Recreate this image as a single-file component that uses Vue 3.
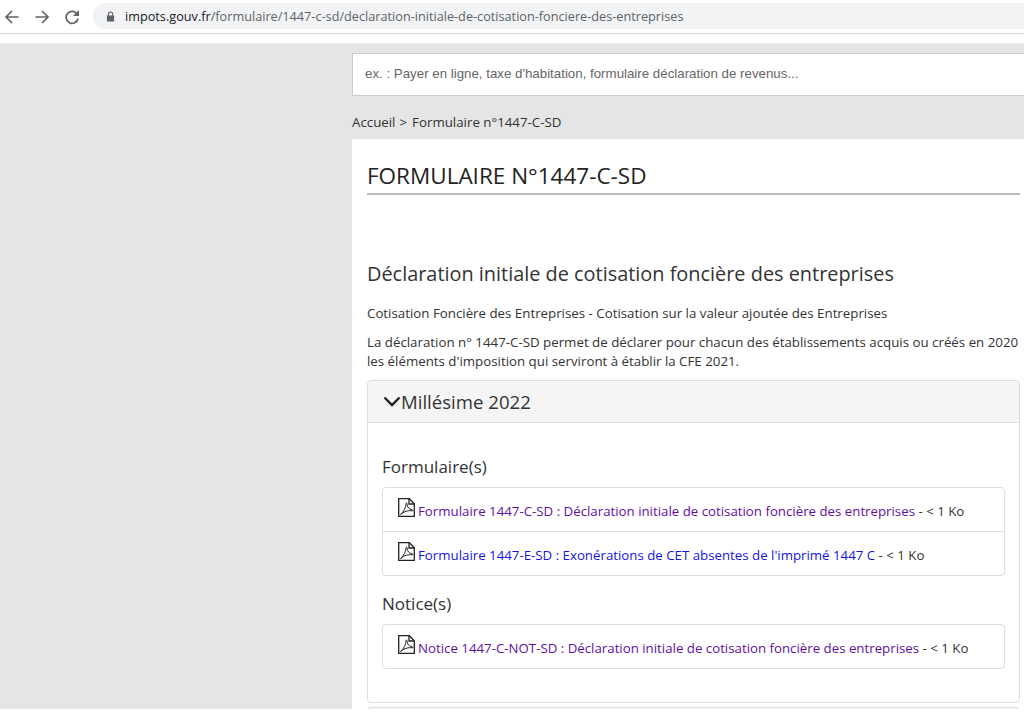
<template>
  <div class="page">
    <header class="chrome">
      <div class="nav">
        <svg class="nav-icon" viewBox="0 0 16 16"><path d="M14.500 8H2.500M8 2 2 8l6 6" /></svg>
        <svg class="nav-icon" viewBox="0 0 16 16"><path d="M1.500 8h12M8 2l6 6-6 6" /></svg>
        <svg class="nav-icon" viewBox="0 0 16 16"><path d="M13.400 5.500A6 6 0 1 0 14 9.500" /><path class="fill" d="M15 1v6h-6z" /></svg>
      </div>
      <div class="omnibox">
        <svg class="lock" viewBox="0 0 10 12"><path d="M2 5V3.400a3 3 0 0 1 6 0V5h1v6.500H1V5zm1.200 0h3.600V3.400a1.800 1.800 0 0 0-3.600 0z" /></svg>
        <span class="url"><span class="host">impots.gouv.fr</span>/formulaire/1447-c-sd/declaration-initiale-de-cotisation-fonciere-des-entreprises</span>
      </div>
    </header>
    <div class="spacer"></div>
    <main class="body">
      <div class="column">
        <div class="search">ex. : Payer en ligne, taxe d'habitation, formulaire déclaration de revenus...</div>
        <nav class="crumbs"><span>Accueil</span><span class="sep">&gt;</span><span>Formulaire n°1447-C-SD</span></nav>
        <section class="sheet">
          <h1>FORMULAIRE N°1447-C-SD</h1>
          <h2>Déclaration initiale de cotisation foncière des entreprises</h2>
          <p class="sub">Cotisation Foncière des Entreprises - Cotisation sur la valeur ajoutée des Entreprises</p>
          <p class="intro">La déclaration n° 1447-C-SD permet de déclarer pour chacun des établissements acquis ou créés en 2020 les éléments d'imposition qui serviront à établir la CFE 2021.</p>
          <div class="panel">
            <div class="panel-head">
              <svg class="chev" viewBox="0 0 18 11"><path d="M1.500 1.500 9 9l7.500-7.500" /></svg>
              <span>Millésime 2022</span>
            </div>
            <div class="panel-body">
              <template v-for="g in groups" :key="g.title">
                <h3>{{ g.title }}</h3>
                <ul class="list">
                  <li v-for="d in g.docs" :key="d.label">
                    <svg class="pdf" viewBox="0 0 17 19">
                      <path d="M.7.7h10.600l5 5v12.600H.7z" />
                      <path d="M11 .7v5.300h5.300" />
                      <path class="thin" d="M2.500 16.500C5.500 14 8 9.500 8 6c0-1.500 1.200-1.200 1.200.4 0 2.800 2 5 5 5.400 1.100.2 1 1.200-.1 1-3-.5-6.800.3-9 1.900-1.200.9-3 2.400-2.600 1.800z" />
                    </svg>
                    <a :class="d.visited ? 'visited' : 'fresh'">{{ d.label }}</a>
                    <span class="size"> - &lt; 1 Ko</span>
                  </li>
                </ul>
              </template>
            </div>
          </div>
          <div class="next"></div>
        </section>
      </div>
    </main>
  </div>
</template>

<script setup>
const groups = [
  {
    title: 'Formulaire(s)',
    docs: [
      { label: 'Formulaire 1447-C-SD : Déclaration initiale de cotisation foncière des entreprises', visited: true },
      { label: "Formulaire 1447-E-SD : Exonérations de CET absentes de l'imprimé 1447 C", visited: false },
    ],
  },
  {
    title: 'Notice(s)',
    docs: [
      { label: 'Notice 1447-C-NOT-SD : Déclaration initiale de cotisation foncière des entreprises', visited: true },
    ],
  },
]
</script>

<style>
html, body { margin: 0; background: #fff; overflow: hidden; }
</style>

<style scoped>
.page {
  width: 1024px;
  height: 713px;
  overflow: hidden;
  font-family: "Open Sans", "Liberation Sans", sans-serif;
  color: #333;
  display: flex;
  flex-direction: column;
}
.chrome {
  height: 33px;
  flex: none;
  display: flex;
  align-items: center;
  gap: 13px;
  border-bottom: 1px solid #d5d6d8;
  padding-left: 4px;
}
.nav { display: flex; gap: 14px; align-items: center; }
.nav-icon { width: 16px; height: 16px; fill: none; stroke: #5f6368; stroke-width: 1.700; }
.nav-icon .fill { fill: #5f6368; stroke: none; }
.omnibox {
  width: 1000px;
  height: 26px;
  border-radius: 13px;
  background: #f1f3f4;
  display: flex;
  align-items: center;
  padding-left: 13px;
  gap: 10px;
  font-size: 12.700px;
  color: #5f6368;
  white-space: nowrap;
  margin-top: -1px;
  flex: none;
}
.lock { width: 9px; height: 11px; fill: #5f6368; flex: none; }
.host { color: #202124; }
.spacer { height: 9px; flex: none; background: #fff; border-bottom: 1px solid #ececec; }
.body { height: 665px; flex: none; background: #e5e5e5; padding-left: 352px; overflow: hidden; }
.column { width: 672px; }
.search {
  margin-top: 9px;
  margin-right: -20px;
  height: 41px;
  line-height: 40px;
  background: #fff;
  border: 1px solid #ccc;
  padding-left: 12px;
  font-family: "Liberation Sans", Arial, sans-serif;
  font-size: 13.300px;
  color: #666;
  white-space: nowrap;
}
.crumbs { height: 43px; line-height: 52px; font-size: 13.300px; color: #333; }
.sep { margin: 0 5px 0 4px; }
.sheet { box-sizing: border-box; background: #fff; padding: 0 4px 0 15px; height: 600px; }
h1 {
  margin: 0;
  padding-top: 22px;
  height: 32px;
  line-height: 29px;
  border-bottom: 2px solid #bbb;
  font-size: 22.500px;
  font-weight: 400;
  color: #222;
}
h2 { margin: 66px 0 0; font-size: 19.900px; line-height: 26px; font-weight: 400; color: #333; }
.sub, .intro { font-size: 13.300px; line-height: 19px; margin: 0; color: #333; }
.sub { margin-top: 17px; }
.intro { margin-top: 10px; }
.panel {
  margin-top: 9px;
  border: 1px solid #ddd;
  border-radius: 4px;
  height: 323px;
  box-sizing: border-box;
}
.panel-head {
  height: 41px;
  background: #f5f5f5;
  border-bottom: 1px solid #ddd;
  display: flex;
  align-items: center;
  padding-left: 15px;
  font-size: 18.600px;
  color: #333;
  border-radius: 3px 3px 0 0;
}
.chev { width: 18px; height: 11px; fill: none; stroke: #222; stroke-width: 2.400; margin-top: -1px; }
.panel-body { padding: 0 14px; }
h3 { margin: 33px 0 0; font-size: 17px; line-height: 22px; font-weight: 400; color: #333; }
.list {
  list-style: none;
  margin: 9px 0 17px;
  padding: 0;
  border: 1px solid #ddd;
  border-radius: 4px;
}
h3 + .list + h3 { margin-top: 0; }
.list li {
  height: 43px;
  padding-left: 15px;
  font-size: 13.280px;
  line-height: 47px;
  white-space: nowrap;
  color: #333;
  display: flex;
}
.list li + li { border-top: 1px solid #ddd; }
.pdf { width: 17px; height: 19px; fill: none; stroke: #222; stroke-width: 1.300; margin-top: 10px; margin-right: 3px; flex: none; }
.pdf .thin { stroke-width: 1; }
.size { white-space: pre; }
.visited { color: #5f0fa5; }
.fresh { color: #1414e6; }
.next { margin-top: 4px; height: 40px; background: #f5f5f5; border: 1px solid #ddd; border-radius: 4px; }
</style>
